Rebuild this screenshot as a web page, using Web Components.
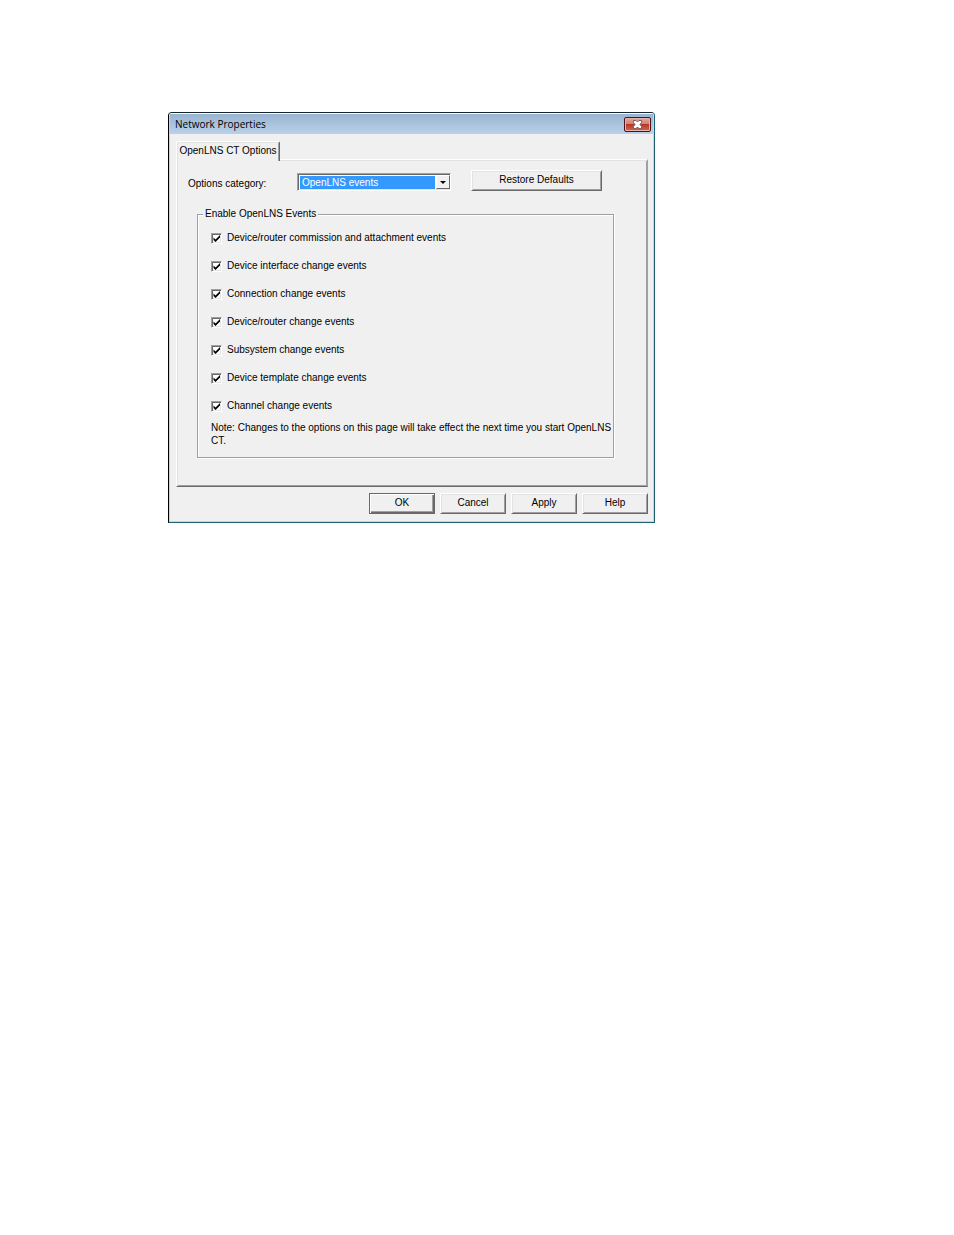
<!DOCTYPE html>
<html lang="en">
<head>
<meta charset="utf-8">
<title>Network Properties</title>
<style>
	body {
		margin: 0;
		padding: 112px 168px;
		background: #fff;
		color: #000;
		font: 10px/12px "Liberation Sans", Arial, sans-serif;
		--face: #f0f0f0;
		--light: #e3e3e3;
		--shadow: #a0a0a0;
		--dark: #696969;
	}
	.toolbar {
		display: flex;
		align-items: flex-end;
		gap: 20px;
		margin-bottom: 17px;
	}
	.toolbar win-button {
		flex: 0 1 131px;
	}
	win-group {
		margin: 0 22px 0 9px;
	}
	p {
		margin: 0;
		padding-top: 1px;
		line-height: 13px;
	}
</style>
</head>
<body>
<win-dialog caption="Network Properties">
	<win-tab caption="OpenLNS CT Options">
		<div class="toolbar">
			<win-select label="Options category:" options="OpenLNS events"></win-select>
			<win-button>Restore Defaults</win-button>
		</div>
		<win-group caption="Enable OpenLNS Events">
			<win-check checked>Device/router commission and attachment events</win-check>
			<win-check checked>Device interface change events</win-check>
			<win-check checked>Connection change events</win-check>
			<win-check checked>Device/router change events</win-check>
			<win-check checked>Subsystem change events</win-check>
			<win-check checked>Device template change events</win-check>
			<win-check checked>Channel change events</win-check>
			<p>Note: Changes to the options on this page will take effect the next time you start OpenLNS<br>CT.</p>
		</win-group>
	</win-tab>
	<win-button slot="actions" default>OK</win-button>
	<win-button slot="actions">Cancel</win-button>
	<win-button slot="actions">Apply</win-button>
	<win-button slot="actions">Help</win-button>
</win-dialog>

<script>
class WinElement extends HTMLElement {
	constructor() {
		super();
		this.attachShadow({ mode: "open" });
	}

	connectedCallback() {
		this.shadowRoot.innerHTML = `<style>* { box-sizing: border-box; }</style>${this.render()}`;
	}

	attr(name) {
		return this.getAttribute(name) ?? "";
	}
}

class WinDialog extends WinElement {
	render() {
		return `<style>
			:host {
				display: block;
				max-width: 487px;
				box-sizing: border-box;
				border: 1px solid;
				border-color: #16242e #1c6474 #1c6474 #000;
				border-radius: 4px 4px 0 0;
				background: var(--face);
				overflow: hidden;
			}
			.frame {
				border: 1px solid #b9d9f3;
				border-top-color: #f4f9fd;
			}
			header {
				display: flex;
				align-items: center;
				justify-content: space-between;
				height: 20px;
				padding: 0 2px 0 5px;
				background: linear-gradient(#99b4d1, #b9d1ea);
			}
			h1 {
				margin: 0;
				font: 10px/12px "Open Sans", sans-serif;
			}
			.close {
				display: grid;
				place-items: center;
				width: 27px;
				height: 15px;
				padding: 0;
				border: 1px solid #4b1320;
				border-radius: 2px;
				background: linear-gradient(#e5a49a, #d47f72 48%, #b5382a 50%, #d0674f);
				box-shadow: inset 0 0 0 1px #e9b2a8;
			}
			main {
				padding: 7px 5px 7px 6px;
			}
			footer {
				display: flex;
				justify-content: flex-end;
				gap: 5px;
				margin-top: 6px;
			}
			::slotted([slot="actions"]) {
				flex: 0 1 66px;
			}
		</style>
		<div class="frame">
			<header>
				<h1>${this.attr("caption")}</h1>
				<button class="close" aria-label="Close">
					<svg width="11" height="9" viewBox="0 0 11 9">
						<path d="M1.5.5H4L5.5 2 7 .5h2.500v2L8 4.500l1.500 2v2H7L5.500 7 4 8.500H1.500v-2L3 4.500l-1.500-2z" fill="#fff" stroke="#6b6470"/>
					</svg>
				</button>
			</header>
			<main>
				<slot></slot>
				<footer><slot name="actions"></slot></footer>
			</main>
		</div>`;
	}
}

class WinTab extends WinElement {
	render() {
		return `<style>
			:host {
				display: block;
			}
			/* overlaps the panel's top edge so that the two read as one sheet */
			.tab {
				position: relative;
				display: block;
				width: 104px;
				height: 20px;
				margin-bottom: -2px;
				padding: 0 0 2px;
				border: solid;
				border-width: 1px 1px 0 1px;
				border-color: #fff var(--dark) #fff #fff;
				border-radius: 2px 2px 0 0;
				background: var(--face);
				box-shadow: inset 1px 1px var(--light), inset -1px 0 var(--shadow);
				color: inherit;
				font: inherit;
				white-space: nowrap;
			}
			.panel {
				padding: 10px 11px 28px;
				border: 1px solid;
				border-color: #fff var(--shadow) var(--dark) #fff;
				box-shadow: inset 1px 1px var(--light), inset -1px -1px var(--shadow);
			}
		</style>
		<button class="tab" role="tab" aria-selected="true">${this.attr("caption")}</button>
		<div class="panel" role="tabpanel"><slot></slot></div>`;
	}
}

class WinButton extends WinElement {
	render() {
		return `<style>
			:host {
				display: block;
			}
			button {
				display: block;
				width: 100%;
				height: 21px;
				padding: 0 0 1px;
				border: 1px solid;
				border-color: #fff var(--dark) var(--dark) #fff;
				background: var(--face);
				box-shadow: inset 1px 1px var(--light), inset -1px -1px var(--shadow);
				color: inherit;
				font: inherit;
			}
			:host([default]) button {
				border-color: var(--dark);
				box-shadow: inset 1px 1px #fff, inset -1px -1px var(--dark), inset -2px -2px var(--shadow);
			}
		</style>
		<button><slot></slot></button>`;
	}
}

class WinSelect extends WinElement {
	render() {
		const options = this.attr("options").split("|");
		return `<style>
			:host {
				display: flex;
				align-items: center;
			}
			label {
				width: 109px;
				padding-top: 3px;
			}
			.box {
				display: grid;
				grid-template-columns: 1fr 14px;
				width: 154px;
				height: 18px;
				border: 1px solid;
				border-color: var(--shadow) #fff #fff var(--shadow);
				box-shadow: inset 1px 1px var(--dark), inset -1px -1px var(--light);
				padding: 1px 0 1px 1px;
				background: #fff;
			}
			select {
				grid-area: 1 / 1 / 2 / 3;
				appearance: none;
				margin: 1px 15px 0 1px;
				padding: 0 2px;
				border: 0;
				border-radius: 0;
				outline: 0;
				background: #39f;
				color: #fff;
				font: inherit;
			}
			.arrow {
				grid-area: 1 / 2;
				display: grid;
				place-items: center;
				border: 1px solid;
				border-color: #fff var(--dark) var(--dark) #fff;
				background: var(--face);
				pointer-events: none;
			}
		</style>
		<label for="field">${this.attr("label")}</label>
		<div class="box">
			<select id="field">${options.map((text) => `<option>${text}</option>`).join("")}</select>
			<span class="arrow"><svg width="6" height="3" viewBox="0 0 6 3"><path d="M0 0h6L3 3z"/></svg></span>
		</div>`;
	}
}

class WinGroup extends WinElement {
	render() {
		return `<style>
			:host {
				display: block;
			}
			fieldset {
				min-width: 0;
				margin: 0;
				padding: 4px 0 10px 13px;
				border: 1px solid var(--shadow);
				box-shadow: 1px 1px #fff, inset 1px 1px #fff;
			}
			legend {
				margin-left: -8px;
				padding: 0 2px;
				background: var(--face);
			}
		</style>
		<fieldset>
			<legend>${this.attr("caption")}</legend>
			<slot></slot>
		</fieldset>`;
	}
}

class WinCheck extends WinElement {
	render() {
		return `<style>
			:host {
				display: block;
			}
			label {
				display: grid;
				grid-template-columns: 11px 1fr;
				gap: 5px;
				align-items: center;
				height: 28px;
			}
			input {
				grid-area: 1 / 1;
				appearance: none;
				width: 11px;
				height: 11px;
				margin: 0;
				border: 1px solid;
				border-color: var(--shadow) #fff #fff var(--shadow);
				background: #fff;
				box-shadow: inset 1px 1px var(--dark), inset -1px -1px var(--light);
			}
			svg {
				grid-area: 1 / 1;
				z-index: 1;
				margin-left: 2px;
				pointer-events: none;
			}
			input:not(:checked) + svg {
				visibility: hidden;
			}
		</style>
		<label>
			<input type="checkbox"${this.hasAttribute("checked") ? " checked" : ""}>
			<svg width="7" height="7" viewBox="0 0 7 7"><path d="M.5 2.500L2.500 4.500 7 0v2.500L2.500 7l-2-2z"/></svg>
			<span><slot></slot></span>
		</label>`;
	}
}

customElements.define("win-dialog", WinDialog);
customElements.define("win-tab", WinTab);
customElements.define("win-button", WinButton);
customElements.define("win-select", WinSelect);
customElements.define("win-group", WinGroup);
customElements.define("win-check", WinCheck);
</script>
</body>
</html>
